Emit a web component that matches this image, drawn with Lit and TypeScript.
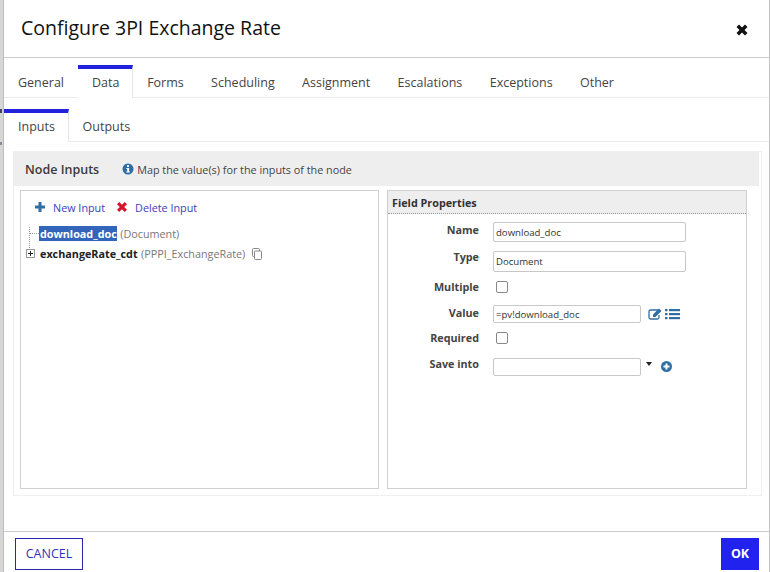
import { LitElement, html, css } from "lit";
import { customElement } from "lit/decorators.js";

const mainTabs = ["General", "Data", "Forms", "Scheduling", "Assignment", "Escalations", "Exceptions", "Other"];
const subTabs = ["Inputs", "Outputs"];

@customElement("app-root")
export class AppRoot extends LitElement {
  static styles = css`
    :host {
      display: block;
      width: 770px;
      height: 572px;
      font-family: "Open Sans", sans-serif;
      color: #333;
      background: #fff;
      overflow: hidden;
      position: relative;
    }
    * { box-sizing: border-box; }
    .dialog {
      height: 572px;
      margin-left: 3px;
      border-left: 1px solid #bdbdbd;
      border-right: 1px solid #c4c4c4;
      box-shadow: -3px 0 0 #d6d6d6;
      display: flex;
      flex-direction: column;
    }
    .dot {
      position: absolute;
      left: 0;
      width: 2px;
      background: #445;
    }
    .dot.one { top: 109px; height: 4px; }
    .dot.two { top: 142px; height: 3px; background: #889; }
    .title-bar {
      height: 58px;
      flex: none;
      border-bottom: 1px solid #ccc;
      display: flex;
      align-items: center;
      justify-content: space-between;
      padding: 0 21px 0 17px;
    }
    h1 {
      margin: 0 0 3px;
      font-size: 19.500px;
      font-weight: 500;
      color: #111;
    }
    .close { display: block; margin-top: 3px; }
    .tabs {
      display: flex;
      border-bottom: 1px solid #ebebeb;
      flex: none;
    }
    .main-tabs { height: 40px; padding-top: 7px; }
    .tab {
      font-size: 12.500px;
      color: #444;
      height: 33px;
      padding: 5px 13.700px 0;
      border-top: 4px solid transparent;
      margin-bottom: -1px;
    }
    .tab:first-child { padding-left: 14px; padding-right: 14px; }
    .tab.active {
      padding-left: 14px;
      padding-right: 13px;
      border-top-color: #2222dd;
      border-right: 1px solid #e6e6e6;
      background: #fff;
    }
    .sub-tabs { height: 44px; padding-top: 11px; }
    .body {
      flex: 1;
      padding: 9px 7px 0 9px;
      min-height: 0;
    }
    .panel {
      height: 345px;
      border: 1px solid #f0f0f0;
      border-left-color: #ececec;
    }
    .panel-head {
      height: 34px;
      margin-right: 2px;
      background: #eee;
      display: flex;
      align-items: center;
      padding-left: 11px;
    }
    .panel-head b {
      font-size: 12.500px;
      font-weight: 600;
      color: #3a3a3a;
      margin-right: 23px;
    }
    .panel-head span {
      font-size: 10.800px;
      color: #444;
      margin-left: 3px;
    }
    .cols {
      display: grid;
      grid-template-columns: 359px 360px;
      gap: 8px;
      padding: 4px 0 0 6px;
    }
    .box {
      height: 299px;
      border: 1px solid #d0d0d0;
    }
    .actions {
      display: flex;
      align-items: center;
      padding: 1px 0 0 13px;
      height: 31px;
      font-size: 10.800px;
      color: #3d3dbb;
    }
    .actions svg { margin-right: 7px; }
    .actions span { margin-right: 11px; }
    .tree { padding: 1px 0 0 8px; font-size: 10.800px; position: relative; }
    .node {
      display: flex;
      align-items: center;
      height: 20px;
      white-space: nowrap;
    }
    .guide { width: 10px; flex: none; border-top: 1px dotted #999; }
    .vline {
      position: absolute;
      left: 8px;
      top: 5px;
      height: 21px;
      border-left: 1px dotted #999;
    }
    .node b { font-weight: 700; color: #222; }
    .node .sel { background: #3366bb; color: #fff; padding-left: 1px; }
    .node em { font-style: normal; color: #777; margin-left: 3.500px; }
    .expander {
      width: 9px;
      height: 9px;
      flex: none;
      border: 1px solid #999;
      margin: 0 5px 0 -3px;
      position: relative;
    }
    .expander::before {
      content: "";
      position: absolute;
      left: 1px;
      right: 1px;
      top: 3px;
      height: 1px;
      background: #222;
    }
    .expander::after {
      content: "";
      position: absolute;
      top: 1px;
      bottom: 1px;
      left: 3px;
      width: 1px;
      background: #222;
    }
    .copy { margin-left: 6px; margin-top: 2px; }
    .props-head {
      height: 23px;
      background: #eee;
      border-bottom: 1px dotted #999;
      font-size: 10.800px;
      font-weight: 700;
      color: #333;
      padding: 4px 0 0 4px;
    }
    .form {
      display: grid;
      grid-template-columns: 91px auto;
      grid-template-rows: 29px 30px 24px 27px 26px 20px;
      padding-top: 8px;
      font-size: 10.800px;
    }
    .form label {
      font-weight: 700;
      color: #444;
      text-align: right;
      line-height: 14px;
      margin-top: -1px;
    }
    .form label.low { margin-top: 1px; }
    .field { display: flex; align-items: flex-start; padding-left: 14px; }
    .input {
      height: 18px;
      border: 1px solid #c8c8c8;
      border-radius: 2px;
      font-size: 9.600px;
      color: #333;
      padding: 0 2px;
      display: flex;
      align-items: center;
      background: #fff;
    }
    .wide { width: 193px; height: 20px; }
    .wide.tall { height: 21px; }
    .narrow { width: 148px; }
    .check {
      width: 12px;
      height: 12px;
      border: 1px solid #888;
      border-radius: 2px;
      margin-left: 3px;
    }
    .icons { display: flex; gap: 3px; margin-left: 7px; margin-top: 3px; }
    .caret {
      width: 0;
      height: 0;
      margin: 4px 0 0 5px;
      border: 3.500px solid transparent;
      border-top: 4px solid #222;
      border-bottom: 0;
    }
    .plus { margin: 3px 0 0 9px; }
    .footer {
      flex: none;
      height: 41px;
      border-top: 1px solid #ccc;
      display: flex;
      justify-content: space-between;
      padding: 6px 10px 0 11px;
    }
    .btn {
      height: 32px;
      font-size: 12.500px;
      display: flex;
      align-items: center;
      justify-content: center;
      padding-bottom: 1px;
    }
    .cancel {
      width: 68px;
      border: 1px solid #2a2aa8;
      color: #3333bb;
    }
    .ok {
      width: 38px;
      background: #2222ee;
      color: #fff;
      font-weight: 700;
    }
  `;

  private tabs(names: string[], active: string) {
    return names.map(
      (n) => html`<div class="tab ${n === active ? "active" : ""}">${n}</div>`
    );
  }

  render() {
    return html`
      <div class="dialog">
        <div class="title-bar">
          <h1>Configure 3PI Exchange Rate</h1>
          <svg class="close" width="12" height="12" viewBox="0 0 12 12">
            <path d="M0.500 3 3 0.500 6 3.500 9 0.500 11.500 3 8.500 6 11.500 9 9 11.500 6 8.500 3 11.500 0.500 9 3.500 6Z" fill="#111" />
          </svg>
        </div>
        <div class="tabs main-tabs">${this.tabs(mainTabs, "Data")}</div>
        <div class="tabs sub-tabs">${this.tabs(subTabs, "Inputs")}</div>
        <div class="body">
          <div class="panel">
            <div class="panel-head">
              <b>Node Inputs</b>
              <svg width="12" height="12" viewBox="0 0 12 12">
                <circle cx="6" cy="6" r="5.500" fill="#2f6ea5" />
                <rect x="5" y="2.200" width="2" height="1.800" fill="#fff" />
                <path d="M4.400 5h2.700v3.500h.8v1H4.300v-1h.9V6h-.8Z" fill="#fff" />
              </svg>
              <span>Map the value(s) for the inputs of the node</span>
            </div>
            <div class="cols">
              <div class="box">
                <div class="actions">
                  <svg width="12" height="12" viewBox="0 0 12 12">
                    <path d="M4.500 1h3v3.500H11v3H7.500V11h-3V7.500H1v-3h3.500Z" fill="#2f6ea5" />
                  </svg>
                  <span>New Input</span>
                  <svg width="12" height="12" viewBox="0 0 12 12">
                    <path d="M1 3.200 3.200 1 6 3.800 8.800 1 11 3.200 8.200 6 11 8.800 8.800 11 6 8.200 3.200 11 1 8.800 3.800 6Z" fill="#d6142c" />
                  </svg>
                  <span>Delete Input</span>
                </div>
                <div class="tree">
                  <div class="vline"></div>
                  <div class="node">
                    <div class="guide"></div>
                    <b class="sel">download_doc</b><em>(Document)</em>
                  </div>
                  <div class="node">
                    <div class="expander"></div>
                    <b>exchangeRate_cdt</b><em>(PPPI_ExchangeRate)</em>
                    <svg class="copy" width="12" height="12" viewBox="0 0 12 12" fill="#fff" stroke="#888">
                      <rect x="1.500" y="0.500" width="7" height="8" rx="1" />
                      <rect x="3.500" y="3" width="7" height="8.500" rx="1" />
                    </svg>
                  </div>
                </div>
              </div>
              <div class="box">
                <div class="props-head">Field Properties</div>
                <div class="form">
                  <label class="low">Name</label>
                  <div class="field"><div class="input wide">download_doc</div></div>
                  <label>Type</label>
                  <div class="field"><div class="input wide tall">Document</div></div>
                  <label>Multiple</label>
                  <div class="field"><div class="check"></div></div>
                  <label class="low">Value</label>
                  <div class="field">
                    <div class="input narrow">=pv!download_doc</div>
                    <div class="icons">
                      <svg width="14" height="12" viewBox="0 0 14 12" fill="none">
                        <path d="M10 2H2.500A1.500 1.500 0 0 0 1 3.500v6A1.500 1.500 0 0 0 2.500 11h7A1.500 1.500 0 0 0 11 9.500V7" stroke="#2f6ea5" stroke-width="1.300" />
                        <path d="M5 6.500 11 .5l2.500 2.500-6 6H5Z" fill="#2f6ea5" />
                      </svg>
                      <svg width="15" height="12" viewBox="0 0 15 12" fill="#2f6ea5">
                        <rect x="0" y="1" width="2.500" height="2.200" /><rect x="4" y="1" width="11" height="2.200" />
                        <rect x="0" y="5" width="2.500" height="2.200" /><rect x="4" y="5" width="11" height="2.200" />
                        <rect x="0" y="9" width="2.500" height="2.200" /><rect x="4" y="9" width="11" height="2.200" />
                      </svg>
                    </div>
                  </div>
                  <label>Required</label>
                  <div class="field"><div class="check"></div></div>
                  <label>Save into</label>
                  <div class="field">
                    <div class="input narrow"></div>
                    <div class="caret"></div>
                    <svg class="plus" width="11" height="11" viewBox="0 0 11 11">
                      <circle cx="5.500" cy="5.500" r="5.500" fill="#2f6ea5" />
                      <path d="M4.500 2.500h2v2h2v2h-2v2h-2v-2h-2v-2h2Z" fill="#fff" />
                    </svg>
                  </div>
                </div>
              </div>
            </div>
          </div>
        </div>
        <div class="footer">
          <div class="btn cancel">CANCEL</div>
          <div class="btn ok">OK</div>
        </div>
      </div>
      <div class="dot one"></div>
      <div class="dot two"></div>
    `;
  }
}
